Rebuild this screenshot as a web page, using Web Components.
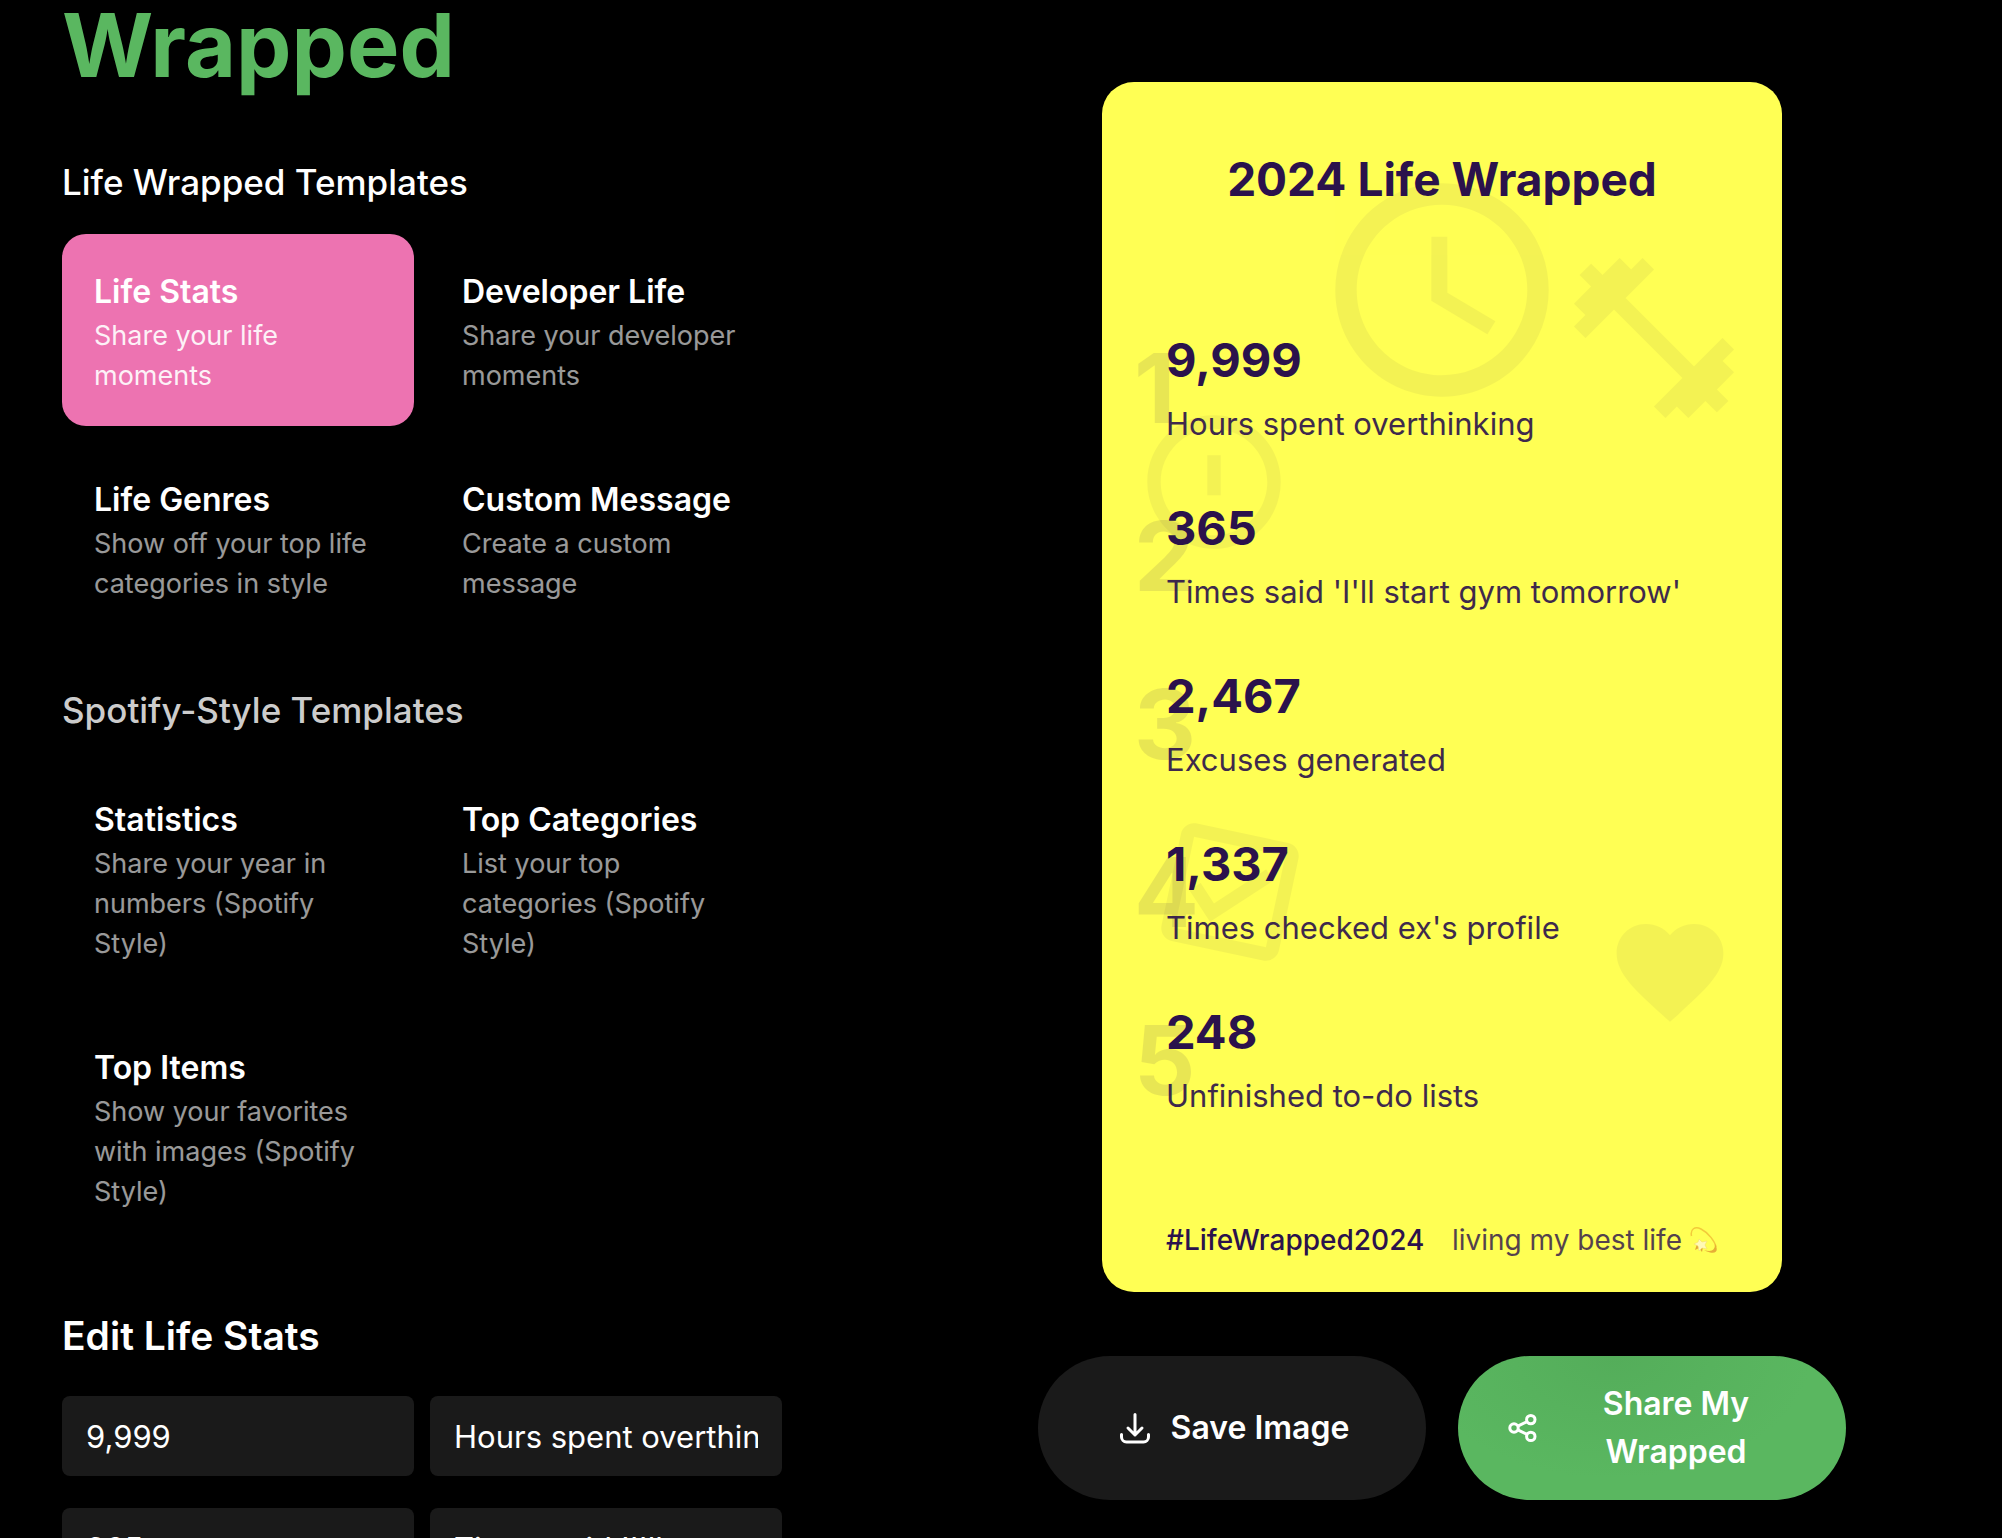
<!DOCTYPE html>
<html lang="en">
<head>
<meta charset="UTF-8">
<meta name="viewport" content="width=device-width, initial-scale=1.0">
<title>Life Wrapped</title>
<style>
    :root {
        --green: #5ab760;
        --pink: #ed73b1;
        --yellow: #ffff54;
        --ink: #2b124c;
        --panel: #1a1a1a;
    }

    body {
        margin: 0;
        background: #000;
        color: #fff;
        font-family: Inter, "Liberation Sans", sans-serif;
        overflow: hidden;
    }
</style>
</head>
<body>
<wrapped-app></wrapped-app>

<script>
    class TemplateCard extends HTMLElement {
        connectedCallback() {
            this.attachShadow({ mode: 'open' });
            this.shadowRoot.innerHTML = `
            <style>
                :host {
                    display: block;
                }

                button {
                    display: flex;
                    flex-direction: column;
                    justify-content: center;
                    box-sizing: border-box;
                    width: 100%;
                    height: 100%;
                    padding: 34px 32px 30px;
                    border: 0;
                    border-radius: 24px;
                    background: transparent;
                    color: #fff;
                    font: inherit;
                    text-align: left;
                    cursor: pointer;
                }

                :host([active]) button {
                    background: var(--pink);
                }

                .name {
                    font-size: 32px;
                    line-height: 48px;
                    font-weight: 600;
                }

                .info {
                    font-size: 27px;
                    line-height: 40px;
                    opacity: 0.6;
                }

                :host([active]) .info {
                    opacity: 0.9;
                }
            </style>
            <button type="button">
                <span class="name"><slot name="name"></slot></span>
                <span class="info"><slot></slot></span>
            </button>
            `;
        }
    }

    class TemplateGroup extends HTMLElement {
        connectedCallback() {
            this.attachShadow({ mode: 'open' });
            this.shadowRoot.innerHTML = `
            <style>
                :host {
                    display: block;
                }

                h2 {
                    margin: 0 0 24px;
                    font-size: 35px;
                    line-height: 56px;
                    font-weight: 500;
                }

                :host([muted]) h2 {
                    color: #ccc;
                }

                .grid {
                    display: grid;
                    grid-template-columns: 1fr 1fr;
                    gap: 16px;
                }
            </style>
            <h2>${this.getAttribute('heading')}</h2>
            <div class="grid"><slot></slot></div>
            `;
        }
    }

    class StatFields extends HTMLElement {
        connectedCallback() {
            this.attachShadow({ mode: 'open' });
            this.shadowRoot.innerHTML = `
            <style>
                :host {
                    display: grid;
                    grid-template-columns: 1fr 1fr;
                    gap: 16px;
                }

                input {
                    box-sizing: border-box;
                    width: 100%;
                    min-width: 0;
                    height: 80px;
                    padding: 0 24px;
                    border: 0;
                    border-radius: 8px;
                    background: var(--panel);
                    color: #fff;
                    font: inherit;
                    font-size: 31px;
                    outline: none;
                }
            </style>
            <input type="text" aria-label="Value" value="${this.getAttribute('value')}">
            <input type="text" aria-label="Label" value="${this.getAttribute('label')}">
            `;
        }
    }

    class StatItem extends HTMLElement {
        connectedCallback() {
            this.attachShadow({ mode: 'open' });
            this.shadowRoot.innerHTML = `
            <style>
                :host {
                    display: block;
                    position: relative;
                }

                /* faded rank number behind the value */
                .rank {
                    position: absolute;
                    left: -32px;
                    top: 0;
                    font-size: 96px;
                    line-height: 128px;
                    font-weight: 700;
                    opacity: 0.1;
                }

                .value {
                    position: relative;
                    font-size: 47px;
                    line-height: 72px;
                    font-weight: 700;
                }

                .label {
                    position: relative;
                    font-size: 31px;
                    line-height: 56px;
                    opacity: 0.9;
                }
            </style>
            <div class="rank">${this.getAttribute('rank')}</div>
            <div class="value">${this.getAttribute('value')}</div>
            <div class="label"><slot></slot></div>
            `;
        }
    }

    class WrappedCard extends HTMLElement {
        connectedCallback() {
            this.attachShadow({ mode: 'open' });
            this.shadowRoot.innerHTML = `
            <style>
                :host {
                    display: flex;
                    flex-direction: column;
                    box-sizing: border-box;
                    position: relative;
                    padding: 64px 64px 32px;
                    border-radius: 32px;
                    background: var(--yellow);
                    color: var(--ink);
                    overflow: hidden;
                }

                .art {
                    position: absolute;
                    fill: currentColor;
                    opacity: 0.05;
                }

                .clock { width: 256px; top: 80px; left: calc(50% - 128px); }
                .gym { width: 192px; top: 160px; right: 32px; }
                .alert { width: 160px; top: 320px; left: 32px; }
                .check { width: 160px; bottom: 320px; left: 48px; transform: rotate(12deg); }
                .heart { width: 128px; bottom: 256px; right: 48px; }

                h1 {
                    position: relative;
                    margin: 0 0 112px;
                    font-size: 46px;
                    line-height: 66px;
                    font-weight: 700;
                    text-align: center;
                }

                .stats {
                    display: flex;
                    flex-direction: column;
                    gap: 40px;
                }

                footer {
                    display: flex;
                    justify-content: space-between;
                    position: relative;
                    margin-top: 96px;
                    font-size: 28px;
                    line-height: 40px;
                    font-weight: 500;
                    white-space: nowrap;
                }

                .mood {
                    display: flex;
                    align-items: center;
                    gap: 8px;
                    font-weight: 400;
                    opacity: 0.8;
                }

                .dizzy {
                    width: 28px;
                    height: 28px;
                }
            </style>
            <svg class="art clock" viewBox="0 0 24 24" aria-hidden="true"><path d="M11.99 2C6.47 2 2 6.48 2 12s4.47 10 9.99 10C17.52 22 22 17.52 22 12S17.52 2 11.99 2zM12 20c-4.42 0-8-3.58-8-8s3.58-8 8-8 8 3.58 8 8-3.58 8-8 8zm.5-13H11v6l5.25 3.15.75-1.23-4.5-2.67z"/></svg>
            <svg class="art gym" viewBox="0 0 24 24" aria-hidden="true"><path d="M20.57 14.86L22 13.43 20.57 12 17 15.57 8.43 7 12 3.43 10.57 2 9.14 3.43 7.71 2 5.57 4.14 4.14 2.71 2.71 4.14l1.43 1.43L2 7.71l1.43 1.43L2 10.57 3.43 12 7 8.43 15.57 17 12 20.57 13.43 22l1.43-1.43L16.29 22l2.14-2.14 1.43 1.43 1.43-1.43-1.43-1.43L22 16.29z"/></svg>
            <svg class="art alert" viewBox="0 0 24 24" aria-hidden="true"><path d="M12 2C6.48 2 2 6.48 2 12s4.48 10 10 10 10-4.48 10-10S17.52 2 12 2zm0 18c-4.42 0-8-3.58-8-8s3.58-8 8-8 8 3.58 8 8-3.58 8-8 8zM11 8h2v6h-2z"/></svg>
            <svg class="art check" viewBox="0 0 24 24" aria-hidden="true"><path d="M19 3H5c-1.1 0-2 .9-2 2v14c0 1.1.9 2 2 2h14c1.1 0 2-.9 2-2V5c0-1.1-.9-2-2-2zm0 16H5V5h14v14zM18 9l-1.41-1.42L10 14.17l-2.59-2.58L6 13l4 4z"/></svg>
            <svg class="art heart" viewBox="0 0 24 24" aria-hidden="true"><path d="M12 21.35l-1.45-1.32C5.4 15.36 2 12.28 2 8.5 2 5.42 4.42 3 7.5 3c1.74 0 3.41.81 4.5 2.09C13.09 3.81 14.76 3 16.5 3 19.58 3 22 5.42 22 8.5c0 3.78-3.4 6.86-8.55 11.54z"/></svg>

            <h1>2024 Life Wrapped</h1>
            <div class="stats"><slot></slot></div>
            <footer>
                <span>#LifeWrapped2024</span>
                <span class="mood">living my best life
                    <svg class="dizzy" viewBox="0 0 28 28" fill="none" aria-hidden="true">
                        <path d="M1.5 10C0 3 5 0 11 3c8 4 14 13 15 18" stroke="#f0bd35" stroke-width="1.5"/>
                        <path d="M25 18c4 7 1 11-8 7.5l-3-1.500c7 2 11 1 11-6z" fill="#e09a30"/>
                        <path d="M7 18l-2 6 4-2 3 4 1-5z" fill="#dc922f"/>
                        <path d="M9 13l3 3 5-1-2 4 2 4-5-1-3 3-1-5-4-2 4-2z" fill="#fff8cf" stroke="#f2d06a" stroke-width=".5"/>
                    </svg>
                </span>
            </footer>
            `;
        }
    }

    class PillButton extends HTMLElement {
        connectedCallback() {
            this.attachShadow({ mode: 'open' });
            this.shadowRoot.innerHTML = `
            <style>
                :host {
                    display: block;
                    flex: 1;
                }

                button {
                    display: flex;
                    align-items: center;
                    justify-content: center;
                    gap: 16px;
                    box-sizing: border-box;
                    width: 100%;
                    height: 100%;
                    padding: 24px 48px;
                    border: 0;
                    border-radius: 72px;
                    background: var(--panel);
                    color: #fff;
                    font: inherit;
                    font-size: 32px;
                    line-height: 48px;
                    font-weight: 600;
                    cursor: pointer;
                }

                :host([primary]) button {
                    background: radial-gradient(ellipse at 40% 0, #54ad5a, var(--green) 60%);
                }

                ::slotted(svg) {
                    display: block;
                    flex: none;
                    width: 40px;
                    height: 40px;
                }

                :host([primary]) ::slotted(svg) {
                    width: 32px;
                    height: 32px;
                }

                :host([primary]) .text {
                    flex: 1;
                }
            </style>
            <button type="button">
                <slot name="icon"></slot>
                <span class="text"><slot></slot></span>
            </button>
            `;
        }
    }

    class WrappedApp extends HTMLElement {
        connectedCallback() {
            this.attachShadow({ mode: 'open' });
            this.shadowRoot.innerHTML = `
            <style>
                :host {
                    display: grid;
                    grid-template-columns: 63fr 80fr;
                    height: 100vh;
                    overflow: hidden;
                }

                .editor {
                    display: flex;
                    flex-direction: column;
                    min-width: 0;
                    padding: 0 100px 0 62px;
                }

                .brand {
                    margin-bottom: 64px;
                    color: var(--green);
                    font-size: 88px;
                    line-height: 90px;
                    font-weight: 700;
                }

                template-group {
                    margin-bottom: 48px;
                }

                h2 {
                    margin: 18px 0 32px;
                    font-size: 39px;
                    line-height: 56px;
                    font-weight: 600;
                }

                .fields {
                    display: flex;
                    flex-direction: column;
                    gap: 32px;
                }

                .preview {
                    display: flex;
                    flex-direction: column;
                    align-items: center;
                    min-width: 0;
                    padding: 82px 156px 0;
                }

                wrapped-card {
                    width: 100%;
                    max-width: 680px;
                }

                .actions {
                    display: flex;
                    gap: 32px;
                    width: 100%;
                    margin-top: 64px;
                }
            </style>

            <main class="editor">
                <div class="brand">Wrapped</div>
                <template-group heading="Life Wrapped Templates">
                    <template-card active><span slot="name">Life Stats</span>Share your life moments</template-card>
                    <template-card><span slot="name">Developer Life</span>Share your developer moments</template-card>
                    <template-card><span slot="name">Life Genres</span>Show off your top life categories in style</template-card>
                    <template-card><span slot="name">Custom Message</span>Create a custom message</template-card>
                </template-group>
                <template-group muted heading="Spotify-Style Templates">
                    <template-card><span slot="name">Statistics</span>Share your year in numbers (Spotify Style)</template-card>
                    <template-card><span slot="name">Top Categories</span>List your top categories (Spotify Style)</template-card>
                    <template-card><span slot="name">Top Items</span>Show your favorites with images (Spotify Style)</template-card>
                </template-group>
                <h2>Edit Life Stats</h2>
                <div class="fields">
                    <stat-fields value="9,999" label="Hours spent overthinking"></stat-fields>
                    <stat-fields value="365" label="Times said 'I'll start gym tomorrow'"></stat-fields>
                </div>
            </main>

            <section class="preview">
                <wrapped-card>
                    <stat-item rank="1" value="9,999">Hours spent overthinking</stat-item>
                    <stat-item rank="2" value="365">Times said 'I'll start gym tomorrow'</stat-item>
                    <stat-item rank="3" value="2,467">Excuses generated</stat-item>
                    <stat-item rank="4" value="1,337">Times checked ex's profile</stat-item>
                    <stat-item rank="5" value="248">Unfinished to-do lists</stat-item>
                </wrapped-card>
                <div class="actions">
                    <pill-button>
                        <svg slot="icon" viewBox="0 0 40 40" fill="none" stroke="currentColor" stroke-width="3" stroke-linecap="round" stroke-linejoin="round" aria-hidden="true"><path d="M20 6.5V27M13 20l7 7 7-7M6.5 26.5V29a5 5 0 0 0 5 5h17a5 5 0 0 0 5-5v-2.5"/></svg>
                        Save Image
                    </pill-button>
                    <pill-button primary>
                        <svg slot="icon" viewBox="0 0 32 32" fill="none" stroke="currentColor" stroke-width="3" aria-hidden="true"><circle cx="8" cy="16" r="4.2"/><circle cx="24.8" cy="7.6" r="4.2"/><circle cx="24.8" cy="24.4" r="4.2"/><path d="M11.8 14.2l9.2-4.6M11.8 17.8l9.2 4.6"/></svg>
                        Share My Wrapped
                    </pill-button>
                </div>
            </section>
            `;
        }
    }

    customElements.define('template-card', TemplateCard);
    customElements.define('template-group', TemplateGroup);
    customElements.define('stat-fields', StatFields);
    customElements.define('stat-item', StatItem);
    customElements.define('wrapped-card', WrappedCard);
    customElements.define('pill-button', PillButton);
    customElements.define('wrapped-app', WrappedApp);
</script>
</body>
</html>
